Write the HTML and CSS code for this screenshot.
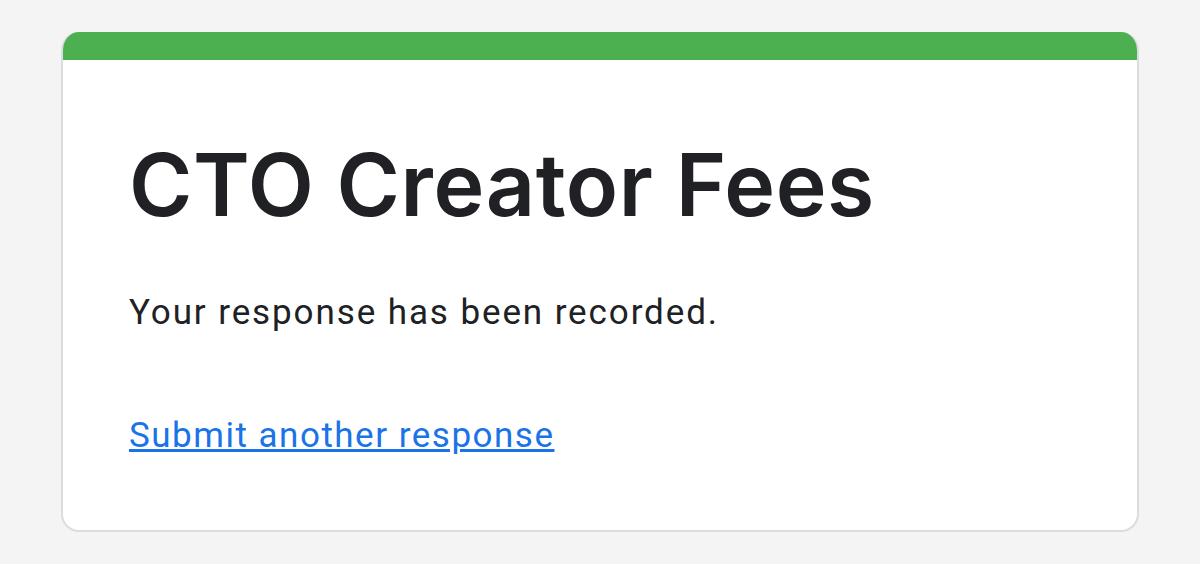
FILE: index.html
```html
<!DOCTYPE html>
<html>
<head>
<meta charset="utf-8">
<link rel="stylesheet" href="styles.css">
</head>
<body>
<div class="card">
  <div class="accent"></div>
  <div class="content">
    <h1 class="title">CTO Creator Fees</h1>
    <p class="message">Your response has been recorded.</p>
    <a class="link" href="#">Submit another response</a>
  </div>
</div>
</body>
</html>
```
FILE: styles.css
```css
html, body {
  margin: 0;
  padding: 0;
  background: #f4f4f4;
}
body {
  padding: 32px 61px 0 61px;
  font-family: Roboto, "Liberation Sans", sans-serif;
}
.card {
  background: #fff;
  border: 2px solid #dadce0;
  border-top: none;
  border-radius: 18px;
  overflow: hidden;
  width: 1078px;
  box-sizing: border-box;
}
.accent {
  height: 28px;
  background: #4caf50;
  margin: 0 -2px;
}
.content {
  padding: 0 66px 0 66px;
  height: 470px;
  box-sizing: border-box;
}
.title {
  margin: 0;
  padding-top: 82px;
  font-family: Inter, "Noto Sans", sans-serif;
  font-weight: 600;
  font-size: 86px;
  letter-spacing: 0.6px;
  line-height: 1;
  color: #202124;
}
.message {
  margin: 0;
  padding-top: 64px;
  font-size: 35px;
  letter-spacing: 1.9px;
  color: #202124;
}
.link {
  display: inline-block;
  margin-top: 82px;
  font-size: 35px;
  letter-spacing: 1.5px;
  color: #1a73e8;
}
```
